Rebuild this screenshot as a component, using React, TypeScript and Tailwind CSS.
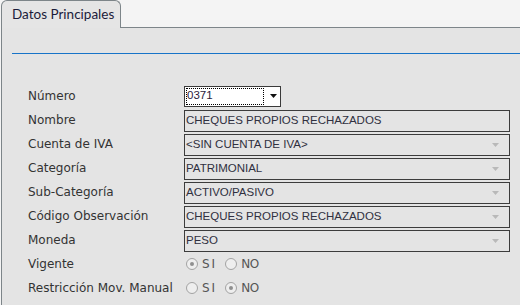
const labelFont = "font-['DejaVu_Sans',sans-serif]";
const fieldFont = "font-['Liberation_Sans',sans-serif]";

const rows: { label: string; value?: string; kind: "select" | "text" | "combo" | "radio"; yes?: boolean }[] = [
  { label: "Número", value: "0371", kind: "select" },
  { label: "Nombre", value: "CHEQUES PROPIOS RECHAZADOS", kind: "text" },
  { label: "Cuenta de IVA", value: "<SIN CUENTA DE IVA>", kind: "combo" },
  { label: "Categoría", value: "PATRIMONIAL", kind: "combo" },
  { label: "Sub-Categoría", value: "ACTIVO/PASIVO", kind: "combo" },
  { label: "Código Observación", value: "CHEQUES PROPIOS RECHAZADOS", kind: "combo" },
  { label: "Moneda", value: "PESO", kind: "combo" },
  { label: "Vigente", kind: "radio", yes: true },
  { label: "Restricción Mov. Manual", kind: "radio", yes: false },
];

function Radio({ checked, text, spaced }: { checked: boolean; text: string; spaced?: boolean }) {
  return (
    <span className="flex items-center">
      <span className="flex h-[12px] w-[12px] items-center justify-center rounded-full border border-[#a3a3a3] bg-[#eeeeee]">
        {checked && <span className="h-[4px] w-[4px] rounded-full bg-[#8f8f8f]" />}
      </span>
      <span className={`ml-[4px] text-[12px] text-[#555] ${spaced ? "tracking-[2px]" : "tracking-[-0.3px]"}`}>
        {text}
      </span>
    </span>
  );
}

function Field({ row }: { row: (typeof rows)[number] }) {
  if (row.kind === "select") {
    return (
      <div className={`flex h-[21px] w-[97px] items-center border border-[#3a3a3a] bg-white ${fieldFont}`}>
        <div className="ml-[1px] flex h-[17px] w-[78px] items-center border border-dotted border-black text-[11.5px] text-[#2b1b3b]">
          0371
        </div>
        <svg width="7" height="4" viewBox="0 0 7 4" className="ml-[6px]">
          <path d="M0 0h7L3.5 4z" fill="#111" />
        </svg>
      </div>
    );
  }
  if (row.kind === "radio") {
    return (
      <div className={`flex items-center gap-[8px] pl-[2px] ${labelFont}`}>
        <Radio checked={!!row.yes} text="SI" spaced />
        <Radio checked={!row.yes} text="NO" />
      </div>
    );
  }
  return (
    <div
      className={`mt-[1px] flex h-[22px] w-[326px] items-center justify-between border border-[#3c3c3c] pl-[1px] pr-[10px] text-[11.5px] text-[#303040] ${fieldFont}`}
    >
      <span>{row.value}</span>
      {row.kind === "combo" && (
        <svg width="7" height="4" viewBox="0 0 7 4">
          <path d="M0 0h7L3.5 4z" fill="#b9b9b9" />
        </svg>
      )}
    </div>
  );
}

export default function App() {
  return (
    <div className="flex h-[305px] w-[520px] flex-col overflow-hidden bg-[#f4f4f4]">
      <div className="flex h-[28px] items-end">
        <div className="ml-[1px] flex h-[28px] w-[120px] items-center rounded-t-[6px] border border-b-0 border-[#7d8589] bg-[#e5e5e5] pl-[10px] font-['Lato',sans-serif] text-[13.5px] text-[#1b1b3a]">
          Datos Principales
        </div>
        <div className="h-[1px] flex-1 bg-[#7d8589]" />
      </div>
      <div className="ml-[1px] flex-1 border-l border-[#7d8589] bg-[#e4e4e4]">
        <div className="ml-[10px] mt-[25px] h-[1px] bg-[#1874c8]" />
        <div className="mt-[30px] flex flex-col pl-[26px]">
          {rows.map((row) => (
            <div key={row.label} className="flex h-[24px] items-center">
              <div className={`w-[156px] text-[12px] text-[#333] ${labelFont}`}>{row.label}</div>
              <Field row={row} />
            </div>
          ))}
        </div>
      </div>
    </div>
  );
}
